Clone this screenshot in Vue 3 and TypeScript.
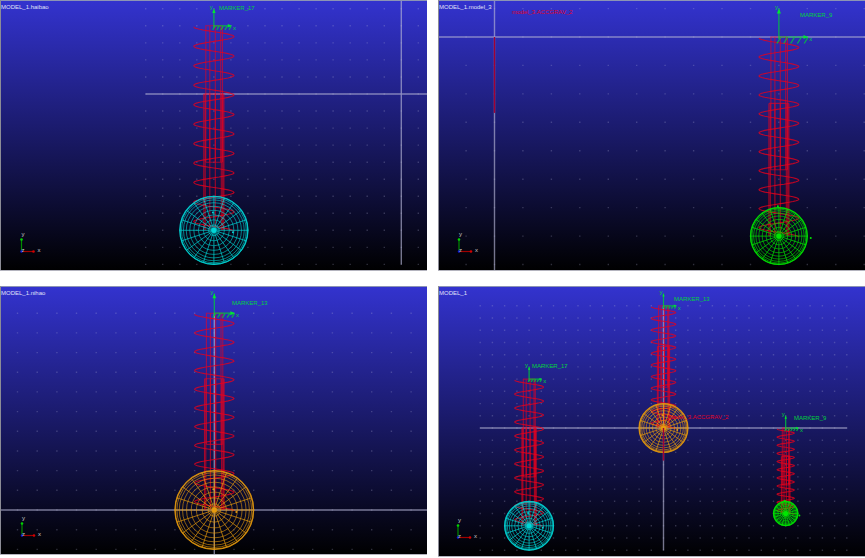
<script setup lang="ts">
interface Assembly {
  name: string
  tone: 'cyan' | 'green' | 'orange'
  x: number
  top: number
  centre: number
  ball: number
  coil: number
  label: { x: number; y: number }
}

interface View {
  title: string
  height: number
  cell: number
  origin: { x: number; y: number }
  triad: { x: number; y: number }
  assemblies: Assembly[]
  gravity?: { x: number; y: number }
}

const WIDTH = 427
const COLS = 15
const ROWS = 10

// Positions are in grid cells from the model origin, y pointing down.
const left = { name: 'MARKER_17', tone: 'cyan' as const, x: -11, top: -4, centre: 8, ball: 2, coil: 1.18 }
const middle = { name: 'MARKER_13', tone: 'orange' as const, x: 0, top: -10, centre: 0, ball: 2, coil: 1 }
const right = { name: 'MARKER_9', tone: 'green' as const, x: 10, top: 0, centre: 7, ball: 1, coil: 0.7 }

const views: View[] = [
  {
    title: 'MODEL_1.haibao', height: 271, cell: 17.04, origin: { x: 401.3, y: 94 }, triad: { x: 21.5, y: 251.5 },
    assemblies: [{ ...left, label: { x: 219, y: 10 } }],
  },
  {
    title: 'MODEL_1.model_3', height: 271, cell: 28.44, origin: { x: 56.5, y: 37 }, triad: { x: 21, y: 251.5 },
    assemblies: [{ ...right, label: { x: 362, y: 17 } }],
    gravity: { x: 74, y: 14 },
  },
  {
    title: 'MODEL_1.nihao', height: 269, cell: 19.68, origin: { x: 214.3, y: 224 }, triad: { x: 22, y: 249.5 },
    assemblies: [{ ...middle, label: { x: 232, y: 19 } }],
  },
  {
    title: 'MODEL_1', height: 271, cell: 12.22, origin: { x: 225.5, y: 142 }, triad: { x: 20, y: 251.5 },
    assemblies: [
      { ...left, label: { x: 94, y: 82 } },
      { ...middle, label: { x: 236, y: 15 } },
      { ...right, label: { x: 356, y: 134 } },
    ],
    gravity: { x: 230, y: 133 },
  },
]

const n = (v: number): number => Math.round(v * 10) / 10

function gridDots(v: View): string {
  let d = ''
  for (let i = -COLS; i <= COLS; i++) {
    const x = v.origin.x + i * v.cell
    if (x < 8 || x > WIDTH) continue
    for (let j = -ROWS; j <= ROWS; j++) {
      const y = v.origin.y + j * v.cell
      if (y < 4 || y > v.height) continue
      d += `M${n(x - 0.7)} ${n(y)}h1.4`
    }
  }
  return d
}

function axes(v: View): string {
  const { x, y } = v.origin
  const w = COLS * v.cell
  const h = ROWS * v.cell
  return `M${n(x - w)} ${y}H${n(x + w)}M${x} ${n(y - h)}V${n(y + h)}`
}

const gravityLine = (v: View): string => `M${v.origin.x} ${v.origin.y}v${n(v.cell * 2.67)}`

function shape(v: View, a: Assembly) {
  const cx = v.origin.x + a.x * v.cell
  const top = v.origin.y + a.top * v.cell
  const cy = v.origin.y + a.centre * v.cell
  const r = a.ball * v.cell
  const coil = a.coil * v.cell
  const len = cy - top
  const turns = 10.5
  const steps = 252

  let spring = ''
  for (let i = 0; i <= steps; i++) {
    const t = (i / steps) * turns
    const x = cx - coil * Math.cos(2 * Math.PI * t)
    const y = top + 1 + (t / turns) * len
    spring += `${i ? 'L' : 'M'}${n(x)} ${n(y)}`
  }

  const lines = (fractions: number[], from: number, to: number): string =>
    fractions.map((f) => `M${n(cx + f * coil)} ${n(from)}V${n(to)}`).join('')
  const cap = (f: number, y: number): string => `M${n(cx - f * coil)} ${n(y)}H${n(cx + f * coil)}`

  const third = top + len / 3
  const lower = top + (len * 2) / 3
  const inner = lines([-0.4, -0.2, 0.07, 0.34, 0.43], top, lower) + cap(0.43, top) + cap(0.4, lower)
  const outer = lines([-0.5, -0.43, -0.2, 0.07, 0.37, 0.44, 0.5], third, cy) + cap(0.5, third)

  const rings = Array.from({ length: 10 }, (_, k) => n(r * Math.sin(((k + 1) * Math.PI) / 20)))
  let spokes = ''
  for (let k = 0; k < 20; k++) {
    const q = (k * Math.PI) / 10
    spokes += `M${n(cx)} ${n(cy)}L${n(cx + r * Math.cos(q))} ${n(cy + r * Math.sin(q))}`
  }

  const c = v.cell
  const arrow = Math.min(2, c * 0.1)
  let hatch = ''
  for (let k = 0; k < 5; k++) {
    const x = cx + k * 0.24 * c
    hatch += `M${n(x + 0.06 * c)} ${n(top + 0.5)}L${n(x - 0.07 * c)} ${n(top + 0.23 * c)}`
  }
  const up = top - c
  const end = cx + c
  const heads =
    `M${n(cx)} ${n(up)}l${n(arrow)} ${n(arrow * 2.4)}h${n(-arrow * 2)}z` +
    `M${n(end + 1)} ${n(top)}l${n(-arrow * 2.4)} ${n(arrow)}v${n(-arrow * 2)}z`

  return {
    cx, cy, top, r, spring, inner, outer, rings, spokes, hatch, heads, up, end,
    stem: `M${n(cx)} ${n(top + 2)}V${n(up)}M${n(cx)} ${n(top)}H${n(end)}`,
  }
}

const scenes = views.map((v) => ({
  ...v,
  dots: gridDots(v),
  axisPath: axes(v),
  gravityPath: gravityLine(v),
  parts: v.assemblies.map((a) => ({ ...a, ...shape(v, a) })),
}))
</script>

<template>
  <main class="views">
    <section v-for="s in scenes" :key="s.title" class="view">
      <svg class="scene" :viewBox="`0 0 ${WIDTH} ${s.height}`" role="img" :aria-label="s.title">
        <path class="dots" :d="s.dots" />
        <path class="axis" :d="s.axisPath" />

        <g v-for="p in s.parts" :key="p.name">
          <path class="tube" :d="p.inner" />
          <path class="tube strong" :d="p.outer" />
          <path class="spring" :d="p.spring" />

          <g class="ball" :class="p.tone">
            <path class="spokes" :d="p.spokes" />
            <circle v-for="ring in p.rings" :key="ring" class="ring" :cx="p.cx" :cy="p.cy" :r="ring" />
            <circle class="rim" :cx="p.cx" :cy="p.cy" :r="p.r" />
            <circle class="hub" :cx="p.cx" :cy="p.cy" r="2.6" />
            <circle class="hub" :cx="p.cx - 1" :cy="p.cy - s.cell * 1.05" r="1" />
            <circle class="hub" :cx="p.cx + s.cell * 1.12" :cy="p.cy + 2" r="1" />
          </g>

          <path class="marker-line" :d="p.stem" />
          <path class="marker-line" :d="p.hatch" />
          <path class="marker-head" :d="p.heads" />
          <text class="marker-text" :x="p.cx - 4" :y="p.up">y</text>
          <text class="marker-text" :x="p.end + 2" :y="p.top + 4">x</text>
          <text class="marker-text" :x="p.label.x" :y="p.label.y">{{ p.name }}</text>
        </g>

        <template v-if="s.gravity">
          <path class="gravity-line" :d="s.gravityPath" />
          <text class="gravity-text" :x="s.gravity.x" :y="s.gravity.y">model_3.ACCGRAV_2</text>
        </template>

        <g :transform="`translate(${s.triad.x} ${s.triad.y})`">
          <path class="triad-y" d="M0 0V-12" />
          <circle class="triad-y-tip" cx="0" cy="-12" r="1.3" />
          <path class="triad-x" d="M0 0H12" />
          <circle class="triad-x-tip" cx="12" cy="0" r="1.3" />
          <circle class="triad-z" cx="0" cy="0" r="1.2" />
          <text class="triad-text" x="0" y="-16">y</text>
          <text class="triad-text" x="16" y="0">x</text>
          <text class="triad-text" x="0" y="0">z</text>
        </g>

        <text class="title" x="1" y="9">{{ s.title }}</text>
        <path class="edge-top" :d="`M0 0.5H${WIDTH}`" />
        <path class="edge-left" :d="`M0.5 0V${s.height}`" />
        <path class="edge-bottom" :d="`M0 ${s.height - 0.5}H${WIDTH}`" />
      </svg>
    </section>
  </main>
</template>

<style>
body {
  margin: 0;
  background: #ffffff;
}
</style>

<style scoped>
.views {
  display: grid;
  grid-template-columns: 1fr 1fr;
  gap: 15px 11px;
  align-items: start;
}

.view {
  min-width: 0;
  background: linear-gradient(#3333cf, #000000);
}

.scene {
  display: block;
  width: 100%;
  height: auto;
  fill: none;
  font-family: "Liberation Sans", Arial, sans-serif;
  font-size: 6px;
}

.dots {
  stroke: #b4b4d8;
  stroke-width: 1.4;
  opacity: 0.26;
}

.axis {
  stroke: #b4b4d4;
  stroke-width: 1.4;
  opacity: 0.65;
}

.tube {
  stroke: #f0001c;
  stroke-width: 1.1;
  opacity: 0.6;
}

.strong {
  opacity: 0.65;
}

.spring {
  stroke: #e6001c;
  stroke-width: 1.1;
  opacity: 0.8;
}

.cyan {
  color: #00d6d6;
}

.green {
  color: #00e600;
}

.orange {
  color: #e69a0c;
}

.spokes {
  stroke: currentColor;
  stroke-width: 1;
  opacity: 0.7;
}

.ring {
  stroke: currentColor;
  stroke-width: 1;
  opacity: 0.6;
}

.rim {
  stroke: currentColor;
  stroke-width: 1.2;
  opacity: 0.75;
}

.hub {
  fill: currentColor;
}

.marker-line {
  stroke: #00c83c;
  stroke-width: 1.2;
  opacity: 0.85;
}

.marker-head {
  fill: #00e632;
}

.marker-text {
  fill: #00d23c;
}

.gravity-line {
  stroke: #a00034;
  stroke-width: 1.4;
}

.gravity-text {
  fill: #e00024;
}

.triad-y {
  stroke: #008c00;
  stroke-width: 1.2;
}

.triad-y-tip {
  fill: #00d200;
}

.triad-x {
  stroke: #a00000;
  stroke-width: 1.2;
}

.triad-x-tip {
  fill: #d20000;
}

.triad-z {
  fill: #1414dc;
}

.triad-text {
  fill: #c8c8c8;
}

.title {
  fill: #e0e0fa;
}

.edge-top {
  stroke: #8c94b4;
}

.edge-left {
  stroke: #8c8c96;
}

.edge-bottom {
  stroke: #b4b4be;
}
</style>
